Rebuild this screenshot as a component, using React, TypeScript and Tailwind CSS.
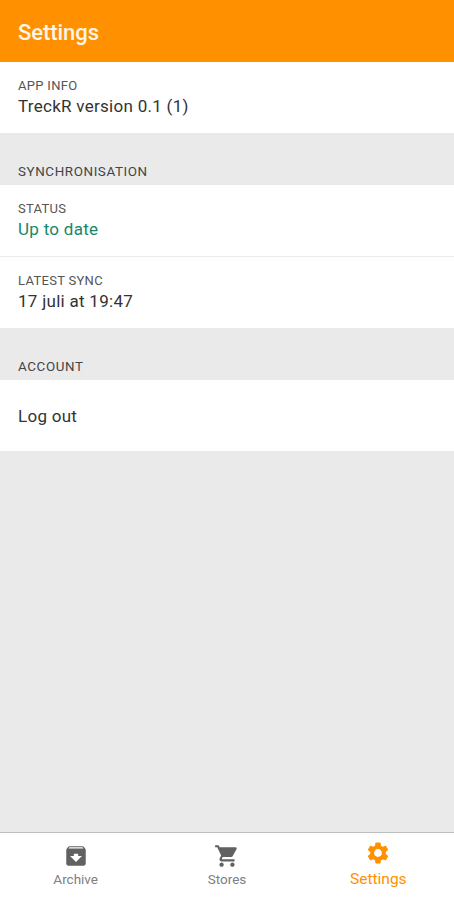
import type { IconType } from "react-icons";
import { MdArchive, MdSettings, MdShoppingCart } from "react-icons/md";
import clsx from "clsx";

interface InfoRowProps {
  label: string;
  value: string;
  highlight?: boolean;
}

export default function App() {
  return (
    <div className="flex h-screen flex-col bg-[#eaeaea] font-[Roboto,sans-serif] text-[#333]">
      <header className="flex h-[62px] shrink-0 items-center bg-[#ff9100] px-[18px] pt-1">
        <h1 className="text-[22px] font-medium leading-7 tracking-[-0.05px] text-[#fff5e8]">
          Settings
        </h1>
      </header>

      <main className="flex-1">
        <InfoRow label="APP INFO" value="TreckR version 0.1 (1)" />

        <SectionTitle title="SYNCHRONISATION" />
        <div className="divide-y divide-[#ebebeb]">
          <InfoRow label="STATUS" value="Up to date" highlight />
          <InfoRow label="LATEST SYNC" value="17 juli at 19:47" />
        </div>

        <SectionTitle title="ACCOUNT" />
        <button className="flex h-[71px] w-full items-center bg-white px-[18px] pt-[2px] text-[17px] tracking-[0.28px]">
          Log out
        </button>
      </main>

      <nav className="grid h-[68px] shrink-0 grid-cols-3 border-t border-[#bdbdbd] bg-white">
        <NavItem icon={MdArchive} label="Archive" />
        <NavItem icon={MdShoppingCart} label="Stores" />
        <NavItem icon={MdSettings} label="Settings" active />
      </nav>
    </div>
  );
}

function InfoRow({ label, value, highlight }: InfoRowProps) {
  return (
    <div className="box-content h-[56px] bg-white px-[18px] pt-[15px]">
      <p className="text-[13px] leading-[17px] tracking-[0.3px] text-[#555]">{label}</p>
      <p
        className={clsx(
          "mt-px text-[17px] leading-[22px] tracking-[0.28px]",
          highlight && "text-[#16876a]"
        )}
      >
        {value}
      </p>
    </div>
  );
}

function SectionTitle({ title }: { title: string }) {
  return (
    <h2 className="flex h-[52px] items-end pb-[5px] pl-[18px] text-[13.4px] leading-[17px] tracking-[0.6px] text-[#444]">
      {title}
    </h2>
  );
}

function NavItem({
  icon: Icon,
  label,
  active,
}: {
  icon: IconType;
  label: string;
  active?: boolean;
}) {
  return (
    <button
      className={clsx(
        "flex flex-col items-center",
        active ? "pt-[7px] text-[#ff9100]" : "pt-[10px] text-[#616161]"
      )}
    >
      <Icon className="size-[26px]" />
      <span
        className={clsx(
          active
            ? "mt-[3px] text-[15.5px] leading-5"
            : "mt-[2px] text-[13.5px] leading-[17px] text-[#808080]"
        )}
      >
        {label}
      </span>
    </button>
  );
}
